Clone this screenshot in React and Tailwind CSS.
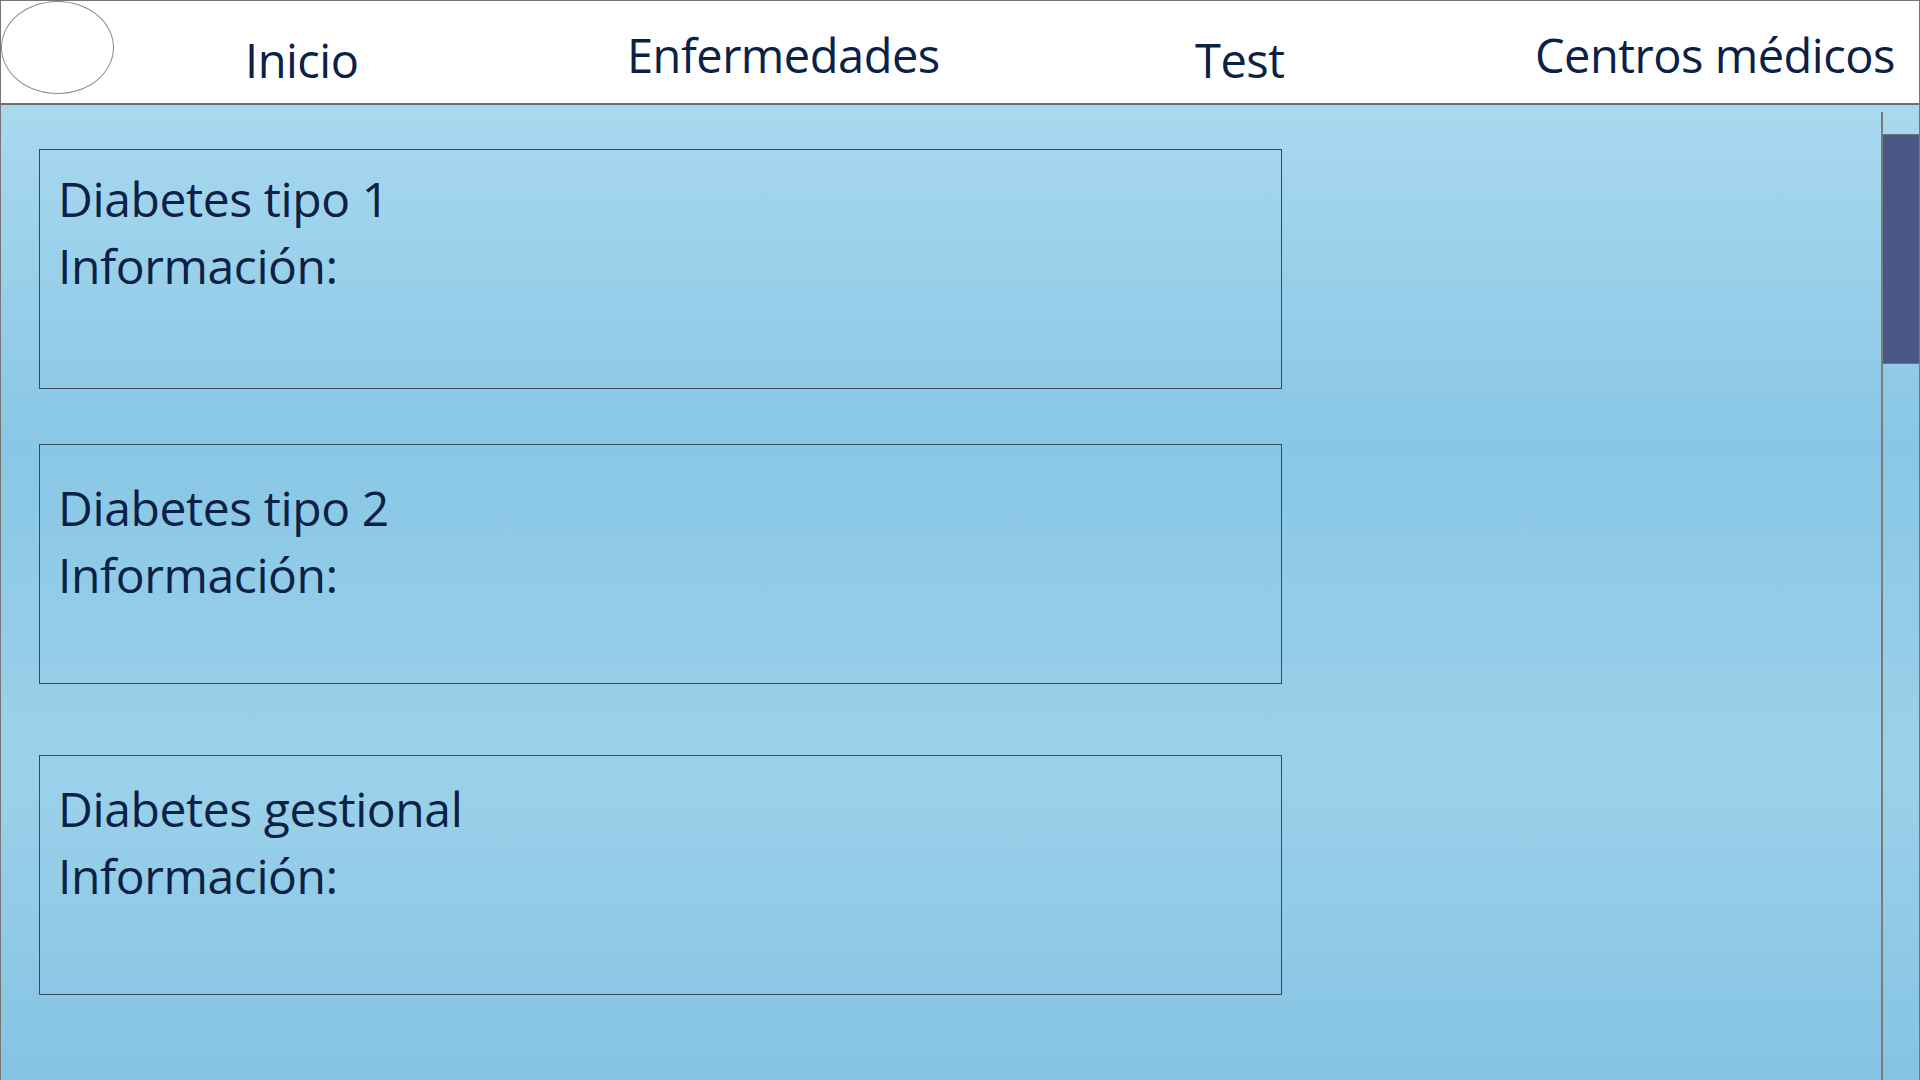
import React from "react";

const navItems = [
  { label: "Inicio", width: "w-[382px]", pad: "pt-[36px]" },
  { label: "Enfermedades", width: "w-[568px]", pad: "pt-[31px]" },
  { label: "Test", width: "w-[340px]", pad: "pt-[36px]" },
  { label: "Centros médicos", width: "flex-1", pad: "pt-[31px]" },
];

const diseases = [
  { title: "Diabetes tipo 1", pad: "pt-[15px]" },
  { title: "Diabetes tipo 2", pad: "pt-[29px]" },
  { title: "Diabetes gestional", pad: "pt-[19px]" },
];

export default function App() {
  return (
    <div className="h-[1080px] w-full overflow-hidden flex flex-col border-x border-t border-[#767676] bg-white font-['Open_Sans',sans-serif] text-[#0c2146]">
      {/* top navigation */}
      <header className="h-[104px] shrink-0 flex items-start bg-white border-b-2 border-[#6e6e6e]">
        <div className="w-[113px] h-[93px] shrink-0 rounded-[50%] border border-[#8a8a8a]" />
        <nav className="flex flex-1 pl-[131px]">
          {navItems.map((item) => (
            <div
              key={item.label}
              className={`${item.width} ${item.pad} text-[47px] leading-none tracking-[-0.5px] whitespace-nowrap`}
            >
              {item.label}
            </div>
          ))}
        </nav>
      </header>

      {/* content */}
      <main className="flex-1 flex bg-[linear-gradient(180deg,#a9d9ef_0%,#88c7e5_35%,#9cd1ea_68%,#84c4e3_100%)]">
        <section className="flex-1 pl-[38px] pt-[44px]">
          {diseases.map((d, i) => (
            <div
              key={d.title}
              className={`w-[1243px] h-[240px] border border-[#3b4a58] pl-[18px] ${d.pad} ${
                i === 0 ? "" : i === 1 ? "mt-[55px]" : "mt-[71px]"
              }`}
            >
              <p className="text-[48px] leading-[67px] tracking-[-0.4px]">{d.title}</p>
              <p className="text-[48px] leading-[67px] tracking-[-0.4px]">Información:</p>
            </div>
          ))}
        </section>

        {/* scrollbar */}
        <aside className="w-[38px] shrink-0 mt-[7px] border-l-2 border-[#7a7a7a] pt-[22px]">
          <div className="h-[230px] bg-[#4b5787] border-y border-[#6c7480]" />
        </aside>
      </main>
    </div>
  );
}
